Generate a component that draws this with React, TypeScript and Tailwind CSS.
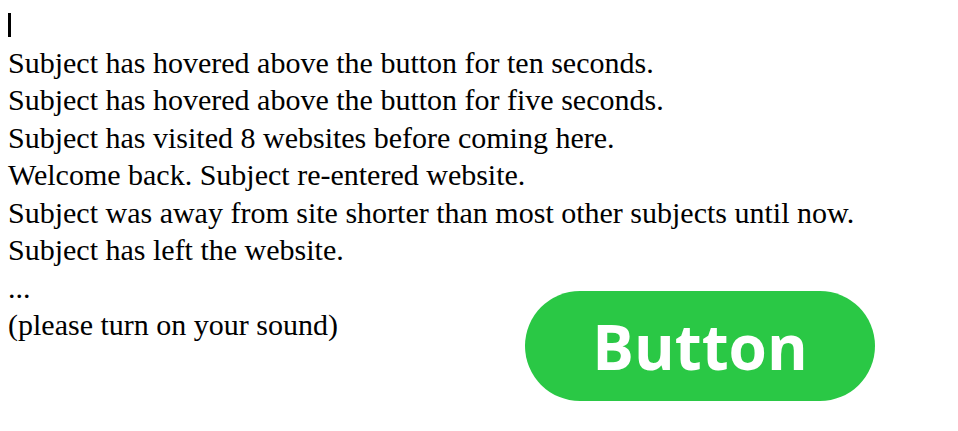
const lines = [
    "Subject has hovered above the button for ten seconds.",
    "Subject has hovered above the button for five seconds.",
    "Subject has visited 8 websites before coming here.",
    "Welcome back. Subject re-entered website.",
    "Subject was away from site shorter than most other subjects until now.",
    "Subject has left the website.",
];

const App = () => {
    return (
        <div className="min-h-screen bg-white px-2 pt-1.5 pb-2 text-black font-['Liberation_Serif','Times_New_Roman',serif] text-[30px] leading-[37.5px]">
            <div className="h-[37.5px] pt-[7px]">
                <span className="block w-[3px] h-[24px] bg-black" />
            </div>
            {lines.map((line, i) => (
                <div key={i}>{line}</div>
            ))}
            <div className="flex items-start">
                <div className="w-[517px] shrink-0">
                    <div>...</div>
                    <div>(please turn on your sound)</div>
                </div>
                <button className="mt-[22.5px] w-[350px] h-[110px] rounded-full bg-[#2ac845] text-white font-['Open_Sans',sans-serif] font-bold text-[62px] leading-none cursor-pointer">
                    Button
                </button>
            </div>
        </div>
    );
};

export default App;
